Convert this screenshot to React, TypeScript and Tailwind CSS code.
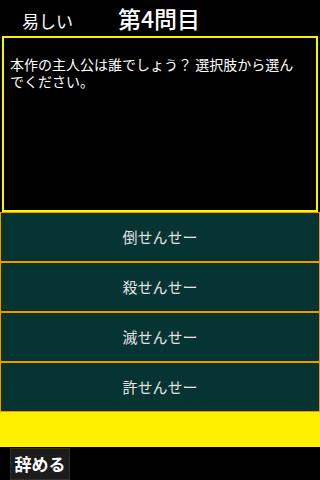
const answers = ["倒せんせー", "殺せんせー", "滅せんせー", "許せんせー"];

export default function App() {
  return (
    <div
      className="w-[320px] h-[480px] bg-black flex flex-col overflow-hidden"
      style={{ fontFamily: '"Noto Sans CJK JP", "Noto Sans", sans-serif' }}
    >
      {/* header */}
      <div className="h-[36px] flex items-center shrink-0">
        <span className="ml-[22px] text-[17px] text-white leading-none mt-[4px]">易しい</span>
        <span className="ml-[45px] text-[23px] font-medium text-white leading-none">第4問目</span>
      </div>

      {/* question */}
      <div className="mx-[2px] h-[176px] shrink-0 border-2 border-[#fff200] bg-black pl-[6px] pr-[12px] pt-[18px]">
        <p className="text-[14px] leading-[17px] text-white">
          本作の主人公は誰でしょう？ 選択肢から選んでください。
        </p>
      </div>

      {/* answers */}
      <div className="flex flex-col gap-[2px] bg-[#d2a800] px-[1px] py-[1px] shrink-0">
        {answers.map((a) => (
          <button
            key={a}
            className="h-[48px] w-full border border-[#2a2500] bg-[#063433] text-[15px] text-[#e4e4e4] flex items-center justify-center"
          >
            {a}
          </button>
        ))}
      </div>

      {/* yellow strip */}
      <div className="h-[35px] bg-[#fff000] shrink-0" />

      {/* footer */}
      <div className="flex-1 flex items-end">
        <button className="ml-[10px] h-[32px] w-[60px] bg-[#1c1c1c] border border-[#2e2e2e] text-[17px] font-bold text-white flex items-center justify-center">
          辞める
        </button>
      </div>
    </div>
  );
}
